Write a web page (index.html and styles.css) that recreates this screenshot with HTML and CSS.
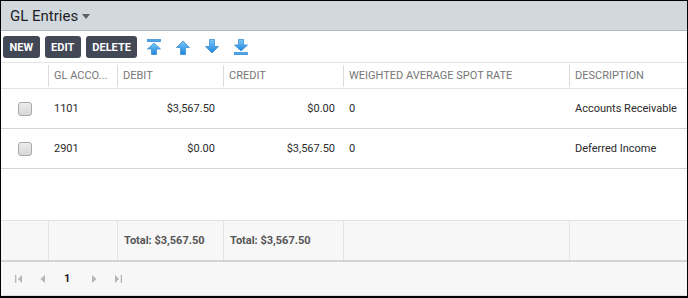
FILE: index.html
```html
<!DOCTYPE html>
<html lang="en">
<head>
    <meta charset="UTF-8">
    <title>GL Entries</title>
    <link rel="stylesheet" href="styles.css">
</head>
<body>

    <div class="panel">
        <div class="panel-head">
            <span class="title">GL Entries</span>
            <span class="caret"></span>
        </div>

        <div class="toolbar">
            <button class="btn">NEW</button>
            <button class="btn">EDIT</button>
            <button class="btn">DELETE</button>
            <div class="tools">
                <svg class="tool" width="16" height="16" viewBox="0 0 16 16">
                    <defs>
                        <linearGradient id="blue" x1="0" y1="0" x2="0" y2="1">
                            <stop offset="0" stop-color="#7cc8f8"/>
                            <stop offset="1" stop-color="#1c86df"/>
                        </linearGradient>
                    </defs>
                    <rect x="1.5" y="0.5" width="13" height="2" fill="url(#blue)" stroke="#3b8fd6" stroke-width="0.8"/>
                    <polygon points="8,4 14.5,10 10.5,10 10.5,15.5 5.5,15.5 5.5,10 1.5,10" fill="url(#blue)" stroke="#3b8fd6" stroke-width="0.8"/>
                </svg>
                <svg class="tool" width="16" height="16" viewBox="0 0 16 16">
                    <polygon points="8,2 14.5,8.5 10.5,8.5 10.5,15.5 5.5,15.5 5.5,8.5 1.5,8.5" fill="url(#blue)" stroke="#3b8fd6" stroke-width="0.8"/>
                </svg>
                <svg class="tool" width="16" height="16" viewBox="0 0 16 16">
                    <polygon points="5.5,0.5 10.5,0.5 10.5,7.5 14.5,7.5 8,14 1.5,7.5 5.5,7.5" fill="url(#blue)" stroke="#3b8fd6" stroke-width="0.8"/>
                </svg>
                <svg class="tool" width="16" height="16" viewBox="0 0 16 16">
                    <polygon points="5.5,0.5 10.5,0.5 10.5,6 14.5,6 8,12 1.5,6 5.5,6" fill="url(#blue)" stroke="#3b8fd6" stroke-width="0.8"/>
                    <rect x="1.5" y="13.5" width="13" height="2" fill="url(#blue)" stroke="#3b8fd6" stroke-width="0.8"/>
                </svg>
            </div>
        </div>

        <div class="grid">
            <div class="row grid-header">
                <div class="hcell"></div>
                <div class="hcell sep">GL Acco...</div>
                <div class="hcell sep">Debit</div>
                <div class="hcell sep">Credit</div>
                <div class="hcell sep">Weighted Average Spot Rate</div>
                <div class="hcell sep">Description</div>
            </div>

            <div class="row grid-line">
                <div class="cell center"><span class="check"></span></div>
                <div class="cell">1101</div>
                <div class="cell num">$3,567.50</div>
                <div class="cell num">$0.00</div>
                <div class="cell">0</div>
                <div class="cell">Accounts Receivable</div>
            </div>
            <div class="row grid-line">
                <div class="cell center"><span class="check"></span></div>
                <div class="cell">2901</div>
                <div class="cell num">$0.00</div>
                <div class="cell num">$3,567.50</div>
                <div class="cell">0</div>
                <div class="cell">Deferred Income</div>
            </div>

            <div class="grid-empty"></div>

            <div class="row grid-footer">
                <div class="fcell"></div>
                <div class="fcell sep"></div>
                <div class="fcell sep">Total: $3,567.50</div>
                <div class="fcell sep">Total: $3,567.50</div>
                <div class="fcell sep"></div>
                <div class="fcell sep"></div>
            </div>
        </div>

        <div class="pager">
            <svg class="pg first" width="8" height="8" viewBox="0 0 8 8">
                <rect x="0" y="0" width="1.3" height="8" fill="#b5b5b5"/>
                <polygon points="7,0 3,4 7,8" fill="#b5b5b5"/>
            </svg>
            <svg class="pg prev" width="5" height="8" viewBox="0 0 5 8">
                <polygon points="5,0 0.5,4 5,8" fill="#b5b5b5"/>
            </svg>
            <span class="page">1</span>
            <svg class="pg next" width="5" height="8" viewBox="0 0 5 8">
                <polygon points="0,0 4.5,4 0,8" fill="#b5b5b5"/>
            </svg>
            <svg class="pg last" width="7" height="8" viewBox="0 0 7 8">
                <polygon points="0,0 4,4 0,8" fill="#b5b5b5"/>
                <rect x="5.7" y="0" width="1.3" height="8" fill="#b5b5b5"/>
            </svg>
        </div>
    </div>

</body>
</html>
```

FILE: styles.css
```css
* {
    box-sizing: border-box;
}
body {
    margin: 0;
    font-family: Roboto, "Liberation Sans", Arial, sans-serif;
    font-size: 11px;
    color: #2b2b2b;
    background: #fff;
}
.panel {
    width: 688px;
    height: 298px;
    border: 1px solid #000;
    border-bottom-width: 2px;
    display: flex;
    flex-direction: column;
}
.panel-head {
    height: 30px;
    flex: none;
    background: #d1d8de;
    border-bottom: 1px solid #b3b8bc;
    display: flex;
    align-items: center;
    padding-left: 9px;
}
.title {
    font-size: 15px;
    color: #1e1e1e;
}
.caret {
    width: 0;
    height: 0;
    margin: 2px 0 0 4px;
    border-left: 4.5px solid transparent;
    border-right: 4.5px solid transparent;
    border-top: 5px solid #5c5f63;
}
.toolbar {
    height: 31px;
    flex: none;
    display: flex;
    align-items: center;
    align-self: flex-start;
    gap: 5px;
    padding: 5px 2px 4px;
}
.btn {
    height: 22px;
    padding: 0 6.5px;
    border: 0;
    border-radius: 3px;
    background: #434856;
    color: #fff;
    font-family: Roboto, "Liberation Sans", Arial, sans-serif;
    font-size: 11px;
    font-weight: bold;
}
.tools {
    display: flex;
    align-items: center;
    gap: 13px;
    margin-left: 4px;
}
.tool {
    display: block;
}
.grid {
    flex: 1;
    display: flex;
    flex-direction: column;
}
.row {
    display: grid;
    grid-template-columns: 47px 69px 106px 120px 226px 1fr;
}
.grid-header {
    height: 27px;
    border-top: 1px solid #e4e4e4;
    border-bottom: 1px solid #e4e4e4;
    align-items: center;
    color: #767676;
    text-transform: uppercase;
}
.hcell {
    height: 22px;
    display: flex;
    align-items: center;
    padding: 0 5px 0 6px;
    white-space: nowrap;
    overflow: hidden;
}
.hcell.sep {
    border-left: 1px solid #dcdcdc;
    padding-left: 5px;
}
.grid-line {
    height: 40px;
    border-bottom: 1px solid #d6d6d6;
    align-items: center;
}
.cell {
    padding: 0 8px 0 6px;
    white-space: nowrap;
    overflow: hidden;
}
.cell.num {
    text-align: right;
}
.cell.center {
    display: flex;
    justify-content: center;
    padding: 0 0 0 1px;
}
.check {
    display: block;
    width: 14px;
    height: 14px;
    border: 1px solid #a8a8a8;
    border-radius: 3px;
    background: linear-gradient(#ececec, #d6d6d6);
}
.grid-empty {
    flex: 1;
}
.grid-footer {
    height: 42px;
    background: #f7f7f7;
    border-top: 1px solid #e2e2e2;
    border-bottom: 2px solid #d4d4d4;
    color: #555;
    font-weight: bold;
}
.fcell {
    display: flex;
    align-items: center;
    padding-left: 6px;
    white-space: nowrap;
}
.fcell.sep {
    border-left: 1px solid #e2e2e2;
}
.pager {
    height: 34px;
    flex: none;
    background: #f7f7f7;
    border-bottom: 1px solid #e0e0e0;
    display: flex;
    align-items: center;
    padding-left: 14px;
}
.pg {
    display: block;
}
.prev {
    margin-left: 17px;
}
.page {
    margin-left: 19px;
    font-weight: bold;
    color: #1b1b1b;
}
.next {
    margin-left: 22px;
}
.last {
    margin-left: 18px;
}
```
